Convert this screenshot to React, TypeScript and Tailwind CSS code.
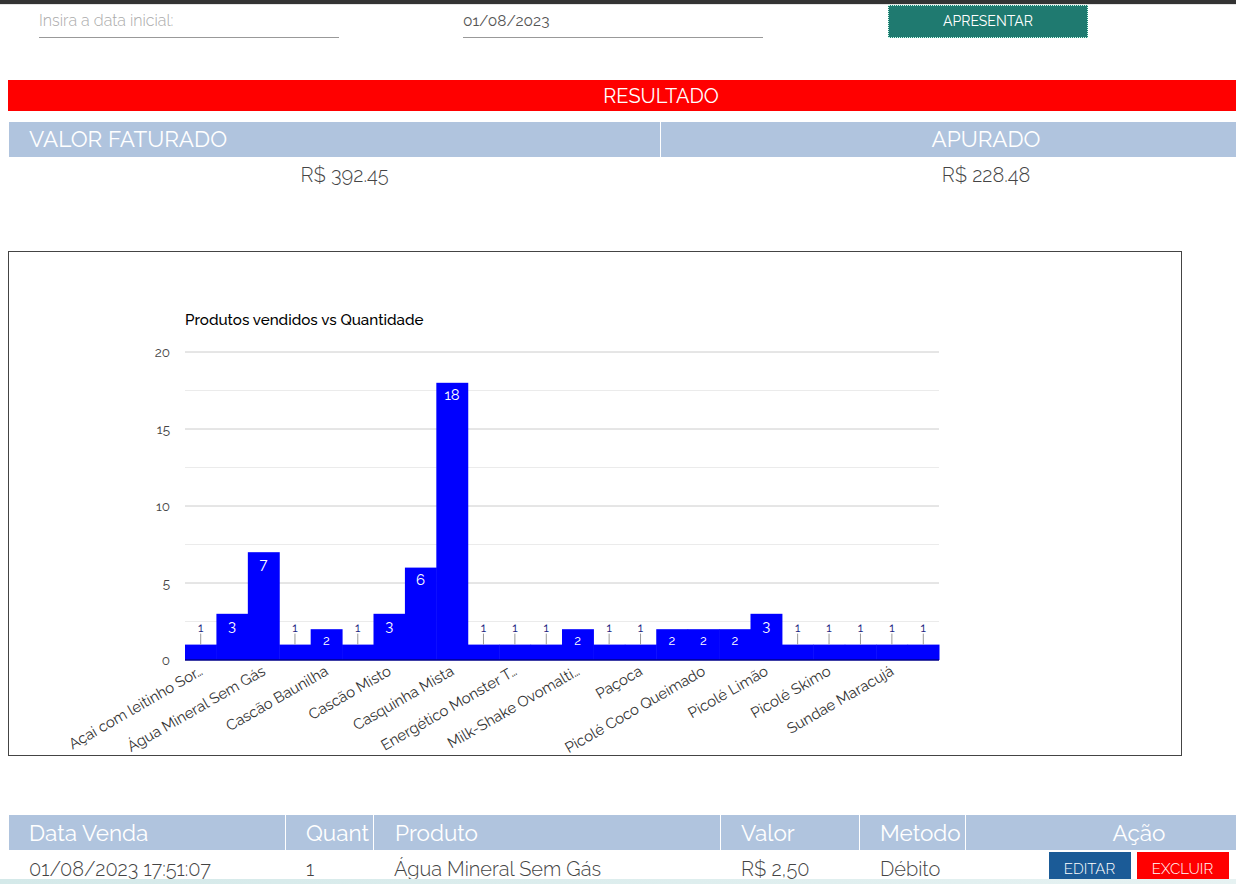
import React from "react";

const values = [1, 3, 7, 1, 2, 1, 3, 6, 18, 1, 1, 1, 2, 1, 1, 2, 2, 2, 3, 1, 1, 1, 1, 1];
const labels = [
  "Açai com leitinho Sor…",
  "Água Mineral Sem Gás",
  "Cascão Baunilha",
  "Cascão Misto",
  "Casquinha Mista",
  "Energético Monster T…",
  "Milk-Shake Ovomalti…",
  "Paçoca",
  "Picolé Coco Queimado",
  "Picolé Limão",
  "Picolé Skimo",
  "Sundae Maracujá",
];

const FONT = "Raleway, Lato, 'Open Sans', sans-serif";

function Chart() {
  const left = 176;
  const right = 930;
  const base = 408;
  const top = 100;
  const scale = (base - top) / 20;
  const bw = (right - left) / values.length;
  const grid = [2.5, 5, 7.5, 10, 12.5, 15, 17.5, 20];
  return (
    <svg width="1172" height="503" style={{ fontFamily: FONT }}>
      <text x={left} y={73} fontSize="15.2" fill="#000" fontWeight="500">
        Produtos vendidos vs Quantidade
      </text>
      {grid.map((g) => {
        const y = base - g * scale;
        const major = g % 5 === 0;
        return (
          <line
            key={g}
            x1={left}
            x2={right}
            y1={y}
            y2={y}
            stroke={major ? "#cccccc" : "#ebebeb"}
            strokeWidth="1"
          />
        );
      })}
      {[0, 5, 10, 15, 20].map((v) => (
        <text
          key={v}
          x={161}
          y={base - v * scale + 5}
          fontSize="13.5"
          fill="#444"
          textAnchor="end"
        >
          {v}
        </text>
      ))}
      {values.map((v, i) => {
        const x = left + i * bw;
        const h = v * scale;
        return (
          <rect key={i} x={x} y={base - h} width={bw + 0.5} height={h} fill="#0000ff" />
        );
      })}
      {values.map((v, i) => {
        const cx = left + i * bw + bw / 2;
        const y = base - v * scale;
        if (v === 1) {
          return (
            <g key={i}>
              <line x1={cx} x2={cx} y1={y - 11} y2={y} stroke="#999" strokeWidth="1" />
              <text x={cx} y={y - 13} fontSize="12.5" fill="#1a237e" textAnchor="middle">
                1
              </text>
            </g>
          );
        }
        return (
          <text
            key={i}
            x={cx}
            y={y + (v === 2 ? 16 : 17)}
            fontSize={v === 2 ? 13 : 15}
            fill="#ffffff"
            textAnchor="middle"
          >
            {v}
          </text>
        );
      })}
      <line x1={left} x2={right} y1={base} y2={base} stroke="#00008a" strokeWidth="1.5" />
      {labels.map((l, k) => {
        const cx = left + k * 2 * bw + bw / 2 + 3;
        const y = base + 14;
        return (
          <text
            key={l}
            x={cx}
            y={y}
            fontSize="15"
            fill="#333"
            textAnchor="end"
            transform={`rotate(-30 ${cx} ${y})`}
          >
            {l}
          </text>
        );
      })}
    </svg>
  );
}

export default function App() {
  return (
    <div
      className="relative w-[1236px] h-[884px] overflow-hidden bg-white"
      style={{ fontFamily: FONT }}
    >
      <div className="h-[4px] bg-[#333333]" />
      <div className="h-px bg-[#e4e4e4]" />
      <div className="flex items-start pl-[39px]">
        <div className="w-[300px] h-[33px] border-b border-[#999] flex items-center text-[16px] font-light text-[#aaaaaa]">
          Insira a data inicial:
        </div>
        <div className="ml-[124px] w-[300px] h-[33px] border-b border-[#999] flex items-center text-[15.5px] text-[#555555]">
          01/08/2023
        </div>
        <div className="ml-[125px] w-[200px] h-[33px] bg-[#1f7a70] border border-dotted border-[#cfe] flex items-center justify-center text-[14px] text-white">
          APRESENTAR
        </div>
      </div>

      <div className="mt-[42px] ml-[8px] w-[1306px] h-[31px] bg-[#ff0000] flex items-center justify-center text-[20px] text-white">
        RESULTADO
      </div>

      <div className="mt-[11px] ml-[9px] w-[1282px]">
        <div className="flex h-[35px] bg-[#b0c4de] text-[22.5px] text-white">
          <div className="w-[651px] pl-[20px] flex items-center">VALOR FATURADO</div>
          <div className="flex-1 border-l border-white pl-[20px] flex items-center justify-center">
            APURADO
          </div>
        </div>
        <div className="flex h-[36px] text-[20px] text-[#444] font-light">
          <div className="w-[651px] pl-[20px] flex items-center justify-center">R$ 392.45</div>
          <div className="flex-1 pl-[21px] flex items-center justify-center">R$ 228.48</div>
        </div>
      </div>

      <div className="mt-[58px] ml-[8px] w-[1174px] h-[505px] border border-[#444444] bg-white">
        <Chart />
      </div>

      <div className="mt-[59px] ml-[9px] w-[1283px] text-[22.5px]">
        <div className="flex h-[35px] bg-[#b0c4de] text-white">
          <div className="w-[276px] pl-[20px] flex items-center pt-[2px]">Data Venda</div>
          <div className="w-[88px] border-l border-white pl-[20px] flex items-center pt-[2px]">Quant</div>
          <div className="w-[347px] border-l border-white pl-[21px] flex items-center pt-[2px]">Produto</div>
          <div className="w-[139px] border-l border-white pl-[20px] flex items-center pt-[2px]">Valor</div>
          <div className="w-[106px] border-l border-white pl-[20px] flex items-center pt-[2px]">Metodo</div>
          <div className="flex-1 border-l border-white pl-[20px] flex items-center justify-center pt-[2px]">
            Ação
          </div>
        </div>
        <div className="flex h-[36px] text-[20px] text-[#444] font-light">
          <div className="w-[276px] pl-[20px] flex items-center pt-[2px]">01/08/2023 17:51:07</div>
          <div className="w-[88px] pl-[21px] flex items-center pt-[2px]">1</div>
          <div className="w-[347px] pl-[21px] flex items-center pt-[2px]">Água Mineral Sem Gás</div>
          <div className="w-[139px] pl-[21px] flex items-center pt-[2px]">R$ 2,50</div>
          <div className="w-[106px] pl-[21px] flex items-center pt-[2px]">Débito</div>
          <div className="flex-1 pl-[20px] flex items-start justify-center gap-[6px] pt-[2px]">
            <div className="w-[82px] h-[34px] bg-[#1b5b97] text-white text-[15px] flex items-center justify-center">
              EDITAR
            </div>
            <div className="w-[92px] h-[34px] bg-[#ff0000] text-white text-[15px] flex items-center justify-center">
              EXCLUIR
            </div>
          </div>
        </div>
      </div>

      <div className="absolute left-0 right-0 bottom-0 h-[5px] bg-gradient-to-r from-[#d4e9e9] to-[#e6f2f2]" />
    </div>
  );
}
